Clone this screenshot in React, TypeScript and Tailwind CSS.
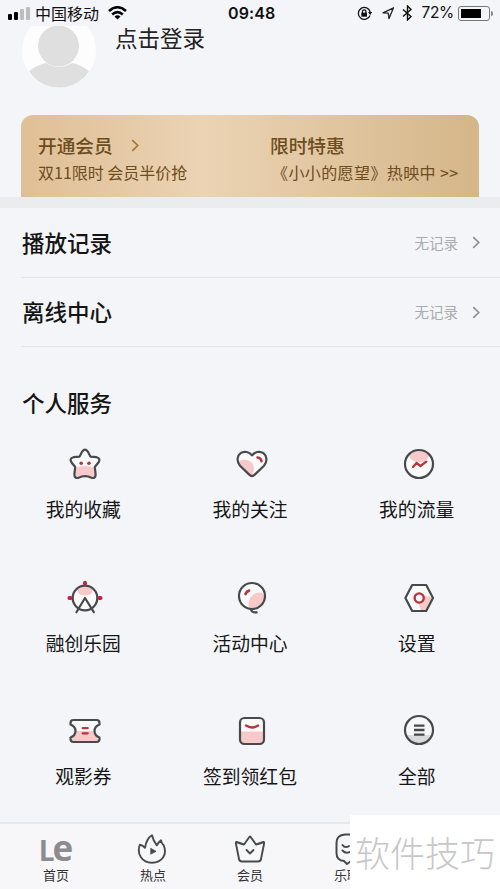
import React from "react";

const D = "#464a4d";
const R = "#b9353c";
const P = "#f7c9c8";

const line = { fill: "none", stroke: D, strokeWidth: 2.2, strokeLinecap: "round", strokeLinejoin: "round" } as const;

function Icon({ children }: { children: React.ReactNode }) {
  return (
    <svg className="ml-1 block h-9 w-9 overflow-visible" viewBox="-18 -18 36 36">
      {children}
    </svg>
  );
}

const starPath =
  "M-2.8 -12.4Q0 -16.4 2.8 -12.4L5.4 -7.4L11.5 -6.8Q16 -5.4 13.6 -1.8L9.8 3L10.6 10.2Q10.8 14.8 6.4 13.8Q0 10.6 -6.4 13.8Q-10.8 14.8 -10.6 10.2L-9.8 3L-13.6 -1.8Q-16 -5.4 -11.5 -6.8L-5.4 -7.4Z";
const heartPath =
  "M0 12.2Q-1.2 12.2 -3 10.4L-12 1.8C-15.8 -2.6 -14.8 -8.4 -11.4 -10.8C-7.6 -13.4 -2.8 -12 0 -8.6C2.8 -12 7.6 -13.4 11.4 -10.8C14.8 -8.4 15.8 -2.6 12 1.8L3 10.4Q1.2 12.2 0 12.2Z";
const ticketPath =
  "M-11.5 -11H11.5Q14.5 -11 14.5 -8V-6.5Q9.5 -4.5 9.5 0Q9.5 4.5 14.5 6.5V8Q14.5 11 11.5 11H-11.5Q-14.5 11 -14.5 8V6.5Q-9.5 4.5 -9.5 0Q-9.5 -4.5 -14.5 -6.5V-8Q-14.5 -11 -11.5 -11Z";

const services = [
  {
    label: "我的收藏",
    icon: (
      <Icon>
        <path d={starPath} fill="#fafafa" />
        <path d="M-9.6 4Q0 0 9.6 4L10.4 12Q9 14 6.4 13.4Q0 10.6 -6.4 13.4Q-9 14 -10.4 12Z" fill={P} />
        <path d={starPath} {...line} />
        <circle cx="-3.8" cy="-.8" r="1.8" fill={R} />
        <circle cx="4" cy="-.8" r="1.8" fill={R} />
      </Icon>
    ),
  },
  {
    label: "我的关注",
    icon: (
      <Icon>
        <path d={heartPath} fill="#fafafa" />
        <path d="M-13.5 -2.5C-7 -7 3 -3 1.8 5.5Q1.5 9 0 12L-11.5 1.5Z" fill={P} />
        <path d={heartPath} {...line} />
        <path d="M5.5 -6.6Q9 -6.2 9.5 -2.8" {...line} stroke={R} strokeWidth="2.5" />
      </Icon>
    ),
  },
  {
    label: "我的流量",
    icon: (
      <Icon>
        <circle r="14" fill="#fafafa" />
        <path d="M-10 -9.5A14 14 0 0 1 10 -9.5C9.5 -3 4 -1.8 0 -1.8S-9.5 -4 -10 -9.5Z" fill={P} />
        <circle r="14" {...line} />
        <path d="M-6 3L-2.5 -1L1.5 2L7.2 -2.4" {...line} stroke={R} strokeWidth="2.3" />
      </Icon>
    ),
  },
  {
    label: "融创乐园",
    icon: (
      <Icon>
        <circle r="12.3" fill="#fafafa" />
        <path d="M-7.5 -9Q0 -14 7.5 -9Q8 -2.5 0 -2.5Q-8 -2.5 -7.5 -9Z" fill={P} />
        <circle r="12.3" {...line} />
        <path d="M-8.6 14.2L0 0L8.8 14.2" {...line} />
        <path d="M-15.6 0H-14.4M14.4 0H15.6M0 -15.2V-14.4" stroke="#ba2944" strokeWidth="4" strokeLinecap="round" />
      </Icon>
    ),
  },
  {
    label: "活动中心",
    icon: (
      <Icon>
        <circle cy="-2" r="13" fill="#fafafa" />
        <path d="M12.5 -2A12.5 12.5 0 0 1 -3 10C-5 2 0 -6 8 -5.5Q12 -5 12.5 -2Z" fill={P} />
        <circle cy="-2" r="13" {...line} />
        <path d="M-6.5 -4Q-5.5 -6.7 -3 -7.4" {...line} stroke={R} strokeWidth="2.7" />
        <path d="M-1.2 11.5Q0 15 4.7 14.3" {...line} />
      </Icon>
    ),
  },
  {
    label: "设置",
    icon: (
      <Icon>
        <path d="M-6.8 -13H7.2L14 0L7.2 13H-6.8L-13.6 0Z" fill="#fafafa" />
        <path d="M2 0Q8 -4 13.5 0L7.2 12H2Q-2 6 2 0Z" fill={P} />
        <path d="M-6.8 -13H7.2L14 0L7.2 13H-6.8L-13.6 0Z" {...line} />
        <circle cx=".2" r="4.6" fill="#fafafa" stroke={R} strokeWidth="2.4" />
      </Icon>
    ),
  },
  {
    label: "观影券",
    icon: (
      <Icon>
        <path d={ticketPath} fill="#fafafa" />
        <path d="M-9.8 0H9.8Q10 5 14.5 6.5V8Q14.5 11 11.5 11H-11.5Q-14.5 11 -14.5 8V6.5Q-10 5 -9.8 0Z" fill={P} />
        <path d={ticketPath} {...line} />
        <path d="M-2.3 -2.8H2.7M-2.3 2.4H2.7" {...line} stroke={R} />
      </Icon>
    ),
  },
  {
    label: "签到领红包",
    icon: (
      <Icon>
        <rect x="-12" y="-13" width="24" height="26" rx="4.5" fill="#fafafa" />
        <path d="M-12 0.5H12V9Q12 13 8 13H-8Q-12 13 -12 9Z" fill={P} />
        <rect x="-12" y="-13" width="24" height="26" rx="4.5" {...line} />
        <path d="M-6 -5.4Q0 -1.6 6 -5.4" {...line} stroke={R} strokeWidth="2.4" />
      </Icon>
    ),
  },
  {
    label: "全部",
    icon: (
      <Icon>
        <circle cy="-1" r="14" fill="#f6f7f8" />
        <path d="M-12.5 4H12.5Q8.5 13 0 13T-12.5 4Z" fill="#d8dadb" />
        <circle cy="-1" r="14" {...line} />
        <path d="M-5 -5.4H5.5M-5 -1H5.5M-5 3.6H5.5" {...line} strokeWidth="2.3" strokeLinecap="butt" />
      </Icon>
    ),
  },
];

function Chevron({ className }: { className: string }) {
  return (
    <svg viewBox="0 0 8 14" className={className} fill="none" stroke="currentColor" strokeWidth="1.7">
      <path d="M1 1.2L7 7L1 12.8" />
    </svg>
  );
}

function StatusBar() {
  return (
    <div className="flex h-[26px] shrink-0 items-center text-base text-[#111]">
      <div className="flex w-[228px] items-center pl-2">
        <div className="flex h-[13px] w-[22px] items-end gap-[2px]">
          <i className="h-[6px] w-1 rounded-[1px] bg-black" />
          <i className="h-2 w-1 rounded-[1px] bg-black" />
          <i className="h-[11px] w-1 rounded-[1px] bg-[#bcbdbf]" />
          <i className="h-[13px] w-1 rounded-[1px] bg-[#bcbdbf]" />
        </div>
        <span className="ml-[5px] leading-[26px]">中国移动</span>
        <svg className="ml-[9px] h-[14px] w-[19px]" viewBox="0 0 19 14" fill="none" stroke="#000" strokeWidth="2.6">
          <path d="M1 5Q9.500 -2.500 18 5" />
          <path d="M4.200 8.400Q9.500 3.800 14.800 8.400" />
          <path d="M6.500 10.400Q9.500 8 12.500 10.400L9.500 13.500Z" fill="#000" stroke="none" />
        </svg>
      </div>
      <span className="w-12 whitespace-nowrap font-['Inter','Noto_Sans_CJK_SC',sans-serif] text-base font-semibold leading-[28px] tracking-[0.1px]">09:48</span>
      <div className="ml-auto flex items-center pr-[7px]">
        <svg className="h-[15px] w-[15px]" viewBox="0 0 15 15" fill="none" stroke="#111" strokeWidth="1.300">
          <path d="M13 9.500A6 6 0 1 1 13.200 6" />
          <path d="M11 6H15.200L13.200 9Z" fill="#111" stroke="none" />
          <path d="M5.500 7V5.500a1.700 1.700 0 0 1 3.400 0V7" />
          <rect x="4.300" y="6.700" width="5.700" height="4" fill="#111" stroke="none" />
        </svg>
        <svg className="ml-[9px] h-[14px] w-[14px]" viewBox="0 0 14 14" fill="none" stroke="#222" strokeWidth="1.300" strokeLinejoin="round">
          <path d="M2 6.800L12.500 1.800L8 12.600L7.300 7.200Z" />
        </svg>
        <svg className="ml-[7px] h-4 w-[11px]" viewBox="0 0 11 16" fill="none" stroke="#111" strokeWidth="1.400">
          <path d="M1 4.500L9 11.500L5.500 15V1L9 4.500L1 11.500" />
        </svg>
        <span className="ml-2 font-['Inter',sans-serif] text-[15.5px] leading-[28px] tracking-[-0.3px]">72%</span>
        <div className="ml-1 flex h-[15px] w-8 rounded-[3px] border border-[#777] p-[2px]">
          <div className="h-full w-5 bg-black" />
        </div>
        <i className="ml-px h-[5px] w-[2px] rounded-r bg-[#888]" />
      </div>
    </div>
  );
}

function RecordRow({ label }: { label: string }) {
  return (
    <div className="ml-[21px] flex h-[69.5px] items-center border-b border-[#e2e4e6] pl-px pr-5 pt-[1px]">
      <span className="text-[22.5px] font-medium text-[#151515]">{label}</span>
      <span className="ml-auto text-[14.5px] text-[#a9abad]">无记录</span>
      <Chevron className="ml-[14px] h-[13px] w-2 text-[#8b8e91]" />
    </div>
  );
}

function Tab({ label, children }: { label: string; children: React.ReactNode }) {
  return (
    <div className="flex w-[97px] shrink-0 flex-col items-center">
      <div className="flex h-8 items-center justify-center">{children}</div>
      <span className="text-[13px] leading-5 text-[#333]">{label}</span>
    </div>
  );
}

export default function App() {
  return (
    <div className="relative flex h-[889px] w-[500px] flex-col overflow-hidden bg-[#f4f5f8] font-['Noto_Sans_CJK_SC',sans-serif]">
      <StatusBar />
      <header className="flex h-[89px] shrink-0 pl-[22px]">
        <div className="h-[62px] w-[74px] shrink-0 overflow-hidden">
          <svg className="-mt-[13px] h-[75px] w-[74px]" viewBox="0 0 74 75">
            <defs>
              <clipPath id="avatar">
                <circle cx="37" cy="37.500" r="37" />
              </clipPath>
            </defs>
            <circle cx="37" cy="37.500" r="37" fill="#fdfdfd" />
            <g clipPath="url(#avatar)">
              <path d="M7 58Q15 52 24 50Q37 58 50 50Q59 52 67 58Q56 75 37 75T7 58Z" fill="#dfdfdf" />
            </g>
            <circle cx="36.500" cy="33" r="20.500" fill="#dfdfdf" />
          </svg>
        </div>
        <span className="ml-[19px] -mt-[6px] text-[22.5px] leading-[34px] text-[#222]">点击登录</span>
      </header>
      <section className="mx-[21px] flex h-[82px] w-[458px] shrink-0 rounded-t-xl bg-linear-to-r from-[#dfbf95] via-[#ebd3b4] via-40% to-[#d4b688] pl-[17px] pt-4 text-[#6d4c20]">
        <div className="w-[232px]">
          <div className="flex h-7 items-center text-[18.7px] font-medium">
            开通会员
            <Chevron className="ml-[18px] h-[13px] w-2 text-[#a5752f]" />
          </div>
          <div className="h-7 whitespace-nowrap text-base leading-[27px]">双11限时 会员半价抢</div>
        </div>
        <div>
          <div className="flex h-7 items-center text-[18.7px] font-medium">限时特惠</div>
          <div className="ml-[2px] h-7 whitespace-nowrap text-base leading-[27px] tracking-[0.4px]">《小小的愿望》热映中 &gt;&gt;</div>
        </div>
      </section>
      <div className="h-[11px] shrink-0 bg-[#eaecee]" />
      <RecordRow label="播放记录" />
      <RecordRow label="离线中心" />
      <h2 className="ml-[22px] mt-[38px] h-[34px] shrink-0 text-[22.5px] font-medium leading-[34px] text-[#151515]">个人服务</h2>
      <main className="grid shrink-0 grid-cols-3 auto-rows-[133.5px] pt-[27px]">
        {services.map((s) => (
          <div key={s.label} className="flex flex-col items-center">
            {s.icon}
            <span className="mt-[13px] whitespace-nowrap text-[18.8px] leading-7 text-[#161616]">{s.label}</span>
          </div>
        ))}
      </main>
      <nav className="absolute bottom-0 left-0 flex h-[67px] w-full overflow-hidden border-t-2 border-[#e7e8ea] bg-[#f7f7f9] pl-[7.5px] pt-[9px]">
        <Tab label="首页">
          <span className="flex items-baseline font-['Open_Sans',sans-serif] font-bold leading-8 text-[#8c8c8e]">
            <span className="text-[28px]">L</span>
            <span className="-ml-[2px] text-[35px]">e</span>
          </span>
        </Tab>
        <Tab label="热点">
          <svg className="-ml-[2px] h-[30px] w-[30px]" viewBox="0 0 30 30" {...line} strokeWidth="1.900">
            <path d="M2.800 10.800Q5.500 11 8 13.800Q9.500 4.500 15 1.300Q16.500 7.500 19.800 11.300Q21.300 8.500 24 6.300Q24.300 9 26.800 11.500C30.500 20.500 25 28.700 15 28.700C5 28.700 -.5 20 2.800 10.800Z" />
            <path d="M14 14.500L19 17.300L14 20Z" fill={D} strokeWidth=".8" />
          </svg>
        </Tab>
        <Tab label="会员">
          <svg className="h-[30px] w-[30px]" viewBox="0 0 30 30" {...line} strokeWidth="1.900">
            <path d="M1.500 8Q5.500 9.500 9 10.500L14 3.500Q15 1.500 16 3.500L21 10.500Q24.500 9.500 28.500 8Q29.500 7.800 29 10L26 25Q25.500 27.500 23 27.500H7Q4.500 27.500 4 25L1 10Q.5 7.800 1.500 8Z" />
            <path d="M11.500 16L15 19.500L18.500 16" />
          </svg>
        </Tab>
        <Tab label="乐聊">
          <svg className="h-[32px] w-[28px]" viewBox="0 0 28 32" {...line} strokeWidth="2">
            <path d="M12 1.500H19Q25 1.500 26 8V20Q25 27.500 18 28L14 31L11 28Q3.500 27.500 3.500 20V10Q3.500 2 12 1.500Z" />
            <path d="M9.500 12Q12 15.500 16 13M9.500 17.500Q13 21.500 18 18.500" />
          </svg>
        </Tab>
      </nav>
      <div className="absolute bottom-0 right-0 flex h-[74px] w-[150px] items-center justify-center bg-white text-[35px] font-light leading-[74px] text-[#c7c7c7]">
        软件技巧
      </div>
    </div>
  );
}
